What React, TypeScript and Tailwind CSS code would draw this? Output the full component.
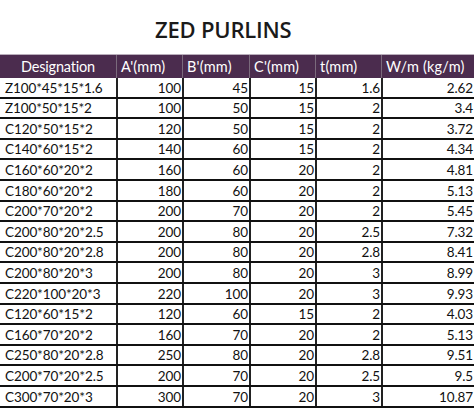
const rows: [string, string, string, string, string, string][] = [
  ['Z100*45*15*1.6', '100', '45', '15', '1.6', '2.62'],
  ['Z100*50*15*2', '100', '50', '15', '2', '3.4'],
  ['C120*50*15*2', '120', '50', '15', '2', '3.72'],
  ['C140*60*15*2', '140', '60', '15', '2', '4.34'],
  ['C160*60*20*2', '160', '60', '20', '2', '4.81'],
  ['C180*60*20*2', '180', '60', '20', '2', '5.13'],
  ['C200*70*20*2', '200', '70', '20', '2', '5.45'],
  ['C200*80*20*2.5', '200', '80', '20', '2.5', '7.32'],
  ['C200*80*20*2.8', '200', '80', '20', '2.8', '8.41'],
  ['C200*80*20*3', '200', '80', '20', '3', '8.99'],
  ['C220*100*20*3', '220', '100', '20', '3', '9.93'],
  ['C120*60*15*2', '120', '60', '15', '2', '4.03'],
  ['C160*70*20*2', '160', '70', '20', '2', '5.13'],
  ['C250*80*20*2.8', '250', '80', '20', '2.8', '9.51'],
  ['C200*70*20*2.5', '200', '70', '20', '2.5', '9.5'],
  ['C300*70*20*3', '300', '70', '20', '3', '10.87'],
]

const headers = ["A'(mm)", "B'(mm)", "C'(mm)", 't(mm)', 'W/m (kg/m)']

export default function App() {
  return (
    <div className="w-[474px] h-[411px] overflow-hidden bg-white" style={{ fontFamily: 'Lato, "Open Sans", sans-serif' }}>
      <h1 className="h-[54px] pt-[15px] pl-[155px] text-[22px] leading-[28px] font-semibold text-[#1a1a1a] tracking-[-0.2px]" style={{ fontFamily: '"Open Sans", sans-serif' }}>
        ZED PURLINS
      </h1>

      <div className="grid grid-cols-[116px_66px_67px_66px_66px_93px] h-[24px] bg-[#4b2c4e] text-white text-[14.5px] border-t border-[#b9aebb]">
        <div className="flex items-center justify-center tracking-[-0.2px]">Designation</div>
        {headers.map(h => (
          <div key={h} className="flex items-center pl-[4px] border-l border-[#7a6a7c] tracking-[0.2px]">{h}</div>
        ))}
      </div>

      {rows.map(r => (
        <div key={r[0]} className="grid grid-cols-[116px_66px_67px_66px_66px_93px] h-[20.6px] border-b-2 border-[#111] text-[13.5px] leading-[17px] tracking-[-0.1px] text-[#111]">
          <div className="pl-[5px] flex items-end">{r[0]}</div>
          {r.slice(1).map((v, i) => (
            <div key={i} className="border-l-2 border-[#222] flex items-end justify-end pr-[1px]">{v}</div>
          ))}
        </div>
      ))}
    </div>
  )
}
